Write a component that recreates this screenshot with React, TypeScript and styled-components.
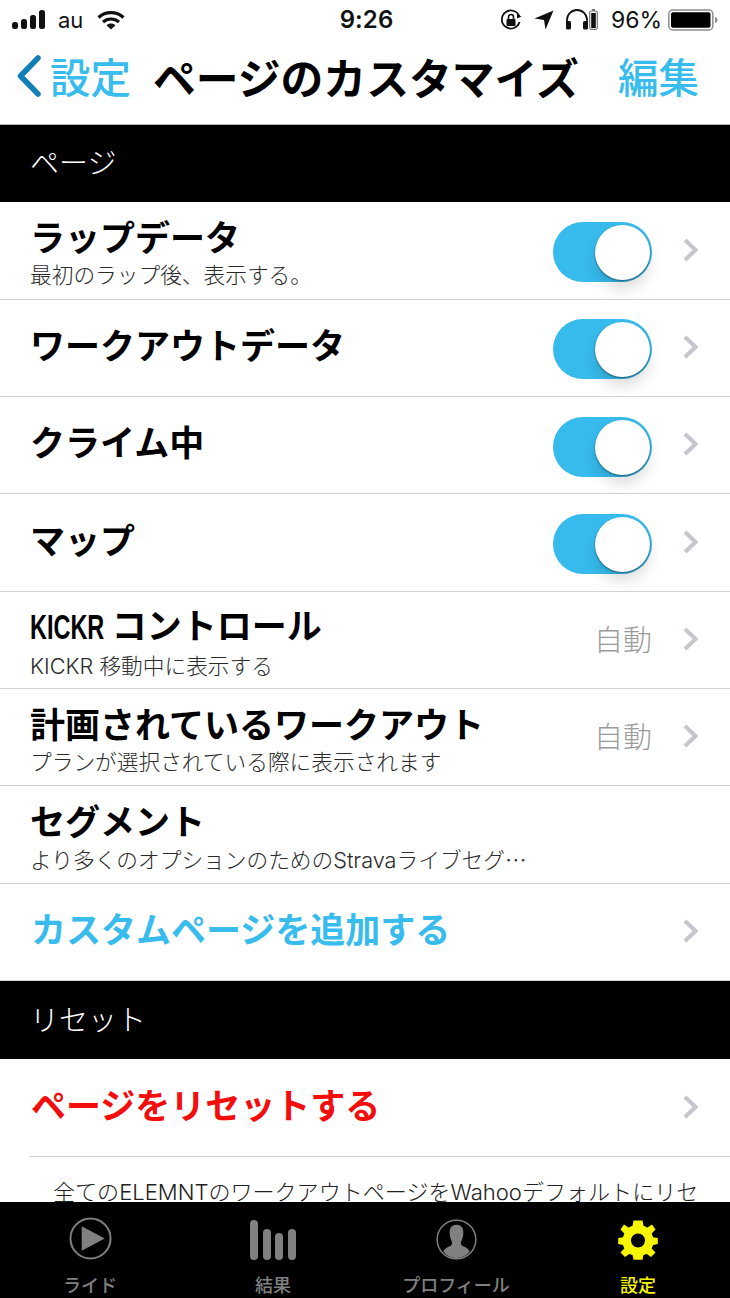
import React from "react";
import styled, { createGlobalStyle } from "styled-components";

const GlobalStyle = createGlobalStyle`
  html, body {
    margin: 0;
    padding: 0;
    background: #fff;
  }
  body {
    font-family: "Inter", "Noto Sans CJK JP", sans-serif;
  }
`;

const jp = `"Noto Sans CJK JP", sans-serif`;
const latinJp = `"Inter", "Noto Sans CJK JP", sans-serif`;

const Page = styled.div`
  width: 730px;
  height: 1298px;
  display: flex;
  flex-direction: column;
  overflow: hidden;
  background: #fff;
`;

const StatusBar = styled.div`
  height: 39px;
  display: grid;
  grid-template-columns: 1fr auto 1fr;
  align-items: center;
  padding: 0 12px 0 12px;
  color: #111;
  font-family: "Inter", sans-serif;
  font-size: 23px;
`;

const StatusGroup = styled.div<{ $end?: boolean }>`
  display: flex;
  align-items: center;
  justify-content: ${(p) => (p.$end ? "flex-end" : "flex-start")};
`;

const Clock = styled.span`
  font-weight: 600;
  font-size: 24px;
  letter-spacing: 0.1px;
  margin-left: 3px;
`;

const Carrier = styled.span`
  margin: 0 14px 0 12px;
  font-size: 22px;
`;

const Percent = styled.span`
  margin: 0 6px 0 13px;
  font-size: 23px;
`;

const NavBar = styled.div`
  height: 85.6px;
  box-sizing: border-box;
  border-bottom: 1px solid #b2b2b2;
  display: flex;
  align-items: center;
  padding: 0 31px 10px 16px;
`;

const BackLink = styled.div`
  display: flex;
  align-items: center;
  gap: 8px;
  width: 137px;
`;

const NavAction = styled.span`
  color: #38bced;
  font-family: ${jp};
  font-size: 40.5px;
  font-weight: 500;
  line-height: 48px;
`;

const NavTitle = styled.div`
  flex: 1;
  color: #000;
  font-family: ${jp};
  font-size: 42.8px;
  font-weight: 700;
  line-height: 52px;
  white-space: nowrap;
`;

const Content = styled.div`
  flex: 1;
  min-height: 0;
  overflow: hidden;
`;

const SectionHeader = styled.div`
  height: 77.87px;
  box-sizing: border-box;
  background: #000;
  color: #fff;
  display: flex;
  align-items: center;
  padding: 0 0 5px 30px;
  font-family: ${jp};
  font-size: 29px;
  font-weight: 300;
`;

const Row = styled.div`
  height: 97.33px;
  box-sizing: border-box;
  display: flex;
  align-items: center;
  padding: 0 32px 0 30px;
  border-bottom: 1px solid #d2d2d6;
`;

const RowText = styled.div`
  flex: 1;
  min-width: 0;
  display: flex;
  flex-direction: column;
`;

const RowTitle = styled.div<{ $tone?: "blue" | "red"; $alone?: boolean }>`
  color: ${(p) =>
    p.$tone === "blue" ? "#38bced" : p.$tone === "red" ? "#f40d0d" : "#000"};
  font-family: ${jp};
  font-size: 35px;
  font-weight: 700;
  line-height: 46px;
  margin-left: ${(p) => (p.$tone ? 1 : 0)}px;
  padding-bottom: ${(p) => (p.$alone ? 8 : 0)}px;
  white-space: nowrap;
`;

const Narrow = styled.span`
  display: inline-block;
  font-family: "Liberation Sans", sans-serif;
  font-weight: 700;
  transform: scaleX(0.67);
  transform-origin: left center;
  margin-right: -37px;
`;

const RowSub = styled.div`
  color: #2b2b2b;
  font-family: ${latinJp};
  font-size: 21.7px;
  font-weight: 300;
  line-height: 26px;
  white-space: nowrap;
  margin-top: 3px;
`;

const Ellipsis = styled.span`
  font-family: ${jp};
`;

const RowValue = styled.span`
  color: #9b9b9b;
  font-family: ${jp};
  font-size: 29px;
  font-weight: 300;
  margin: 0 31px 4px 0;
`;

const Switch = styled.div`
  position: relative;
  width: 99px;
  height: 60px;
  margin: 3px 31px 0 0;
  border-radius: 30px;
  background: #36bbec;
`;

const Knob = styled.div`
  position: absolute;
  top: 3px;
  right: 2px;
  width: 55px;
  height: 55px;
  border-radius: 50%;
  background: #fff;
  box-shadow: 0 1px 2px rgba(0, 0, 0, 0.45), 0 10px 14px rgba(0, 0, 0, 0.12);
`;

const ChevronSlot = styled.div`
  display: flex;
  margin-bottom: 2px;
`;

const Spacer = styled.div<{ $w: number }>`
  width: ${(p) => p.$w}px;
`;

const ResetRow = styled(Row)`
  border-bottom: none;
`;

const Divider = styled.div`
  height: 1px;
  margin-left: 30px;
  background: #d2d2d6;
`;

const Note = styled.div`
  padding: 20px 20px 0 53px;
  color: #222;
  font-family: ${latinJp};
  font-size: 22.05px;
  font-weight: 300;
  line-height: 30px;
  white-space: nowrap;
`;

const TabBar = styled.div`
  height: 96px;
  flex-shrink: 0;
  background: #000;
  display: grid;
  grid-template-columns: 180px 186px 180px 184px;
`;

const Tab = styled.div<{ $active?: boolean }>`
  display: flex;
  flex-direction: column;
  align-items: center;
  color: ${(p) => (p.$active ? "#f7f500" : "#808080")};
  font-family: ${jp};
  font-size: 18px;
  font-weight: 500;
`;

const TabIcon = styled.div`
  height: 58px;
  margin-bottom: 11px;
  display: flex;
  align-items: flex-end;
  justify-content: center;
`;

const TabLabel = styled.span`
  line-height: 26px;
  white-space: nowrap;
`;

const Signal = () => (
  <svg width="34" height="20" viewBox="0 0 34 20">
    <g fill="#111">
      <rect x="0" y="12" width="6" height="7" rx="2.5" />
      <rect x="9" y="9" width="6" height="10" rx="2.5" />
      <rect x="18" y="5" width="6" height="14" rx="2.5" />
      <rect x="27" y="0" width="6" height="19" rx="2.5" />
    </g>
  </svg>
);

const Wifi = () => (
  <svg width="28" height="20" viewBox="0 0 28 20" fill="none" stroke="#111" strokeWidth="3.2">
    <path d="M1.5 7.5C8.5 1 19.5 1 26.5 7.5" />
    <path d="M6 12C10.500 8 17.500 8 22 12" />
    <path d="M14 19.500L9.500 15.200C12 13 16 13 18.500 15.200Z" fill="#111" stroke="none" />
  </svg>
);

const RotationLock = () => (
  <svg width="22" height="22" viewBox="0 0 22 22" fill="none">
    <path d="M19.500 13A9 9 0 1 1 19.500 8" stroke="#111" strokeWidth="1.800" />
    <path d="M21.500 7.500L17 9.500L17 5Z" fill="#111" />
    <rect x="6.500" y="10" width="9" height="7" rx="1" fill="#111" />
    <path d="M8.500 10V8A2.500 2.500 0 0 1 13.500 8V10" stroke="#111" strokeWidth="1.600" />
  </svg>
);

const LocationArrow = () => (
  <svg width="20" height="20" viewBox="0 0 20 20">
    <path d="M19.500 0.500L0.500 8.500L10 10L11.500 19.500Z" fill="#111" />
  </svg>
);

const Headphones = () => (
  <svg width="24" height="21" viewBox="0 0 24 21" fill="none">
    <path d="M2 14V11A10 10 0 0 1 22 11V14" stroke="#111" strokeWidth="1.800" />
    <rect x="1" y="12" width="5" height="8.500" rx="1.600" fill="#111" />
    <rect x="18" y="12" width="5" height="8.500" rx="1.600" fill="#111" />
  </svg>
);

const SmallBattery = () => (
  <svg width="9" height="21" viewBox="0 0 9 21">
    <rect x="3" y="0" width="3" height="2" fill="#777" />
    <rect x="0.700" y="2" width="7.600" height="18.300" rx="1.500" fill="none" stroke="#777" strokeWidth="1.200" />
    <rect x="2.200" y="4" width="4.600" height="15" fill="#111" />
  </svg>
);

const Battery = () => (
  <svg width="50" height="22" viewBox="0 0 50 22">
    <rect x="0.800" y="1" width="44" height="20" rx="4" fill="#fff" stroke="#8c8c8c" strokeWidth="1.500" />
    <rect x="3" y="3.200" width="39.500" height="15.600" rx="2" fill="#000" />
    <path d="M47 8C48.500 8.400 49.500 9.500 49.500 11C49.500 12.500 48.500 13.600 47 14Z" fill="#8c8c8c" />
  </svg>
);

const BackChevron = () => (
  <svg width="26" height="42" viewBox="0 0 26 42" fill="none">
    <path d="M22 3L4.500 21L22 39" stroke="#117fb8" strokeWidth="5.500" strokeLinecap="round" strokeLinejoin="round" />
  </svg>
);

const Chevron = () => (
  <ChevronSlot>
    <svg width="15" height="24" viewBox="0 0 15 24" fill="none">
      <path d="M2 2L12.500 12L2 22" stroke="#c6c6cc" strokeWidth="4" />
    </svg>
  </ChevronSlot>
);

const PlayIcon = () => (
  <svg width="43" height="43" viewBox="0 0 44 44">
    <circle cx="22" cy="22" r="20.500" fill="none" stroke="#808080" strokeWidth="2" />
    <path d="M13 9.500L36.500 22L13 34.500Z" fill="#808080" />
  </svg>
);

const BarsIcon = () => (
  <svg width="46" height="40" viewBox="0 0 46 40">
    <g fill="#808080">
      <rect x="0" y="0" width="8" height="40" rx="4" />
      <rect x="13" y="9" width="8" height="31" rx="4" />
      <rect x="25" y="13" width="8" height="27" rx="4" />
      <rect x="38" y="9" width="8" height="31" rx="4" />
    </g>
  </svg>
);

const ProfileIcon = () => (
  <svg width="41" height="41" viewBox="0 0 42 42">
    <circle cx="21" cy="21" r="19.800" fill="none" stroke="#808080" strokeWidth="1.500" />
    <path
      d="M21 6C15.500 6 13.800 10 14 15C14.200 18 14.800 20 16 22.500C16.800 24.500 16.500 26.500 15 27.500C12.500 29 8.500 30 7.500 33.500C11 37.800 16 40 21 40C26 40 31 37.800 34.500 33.500C33.500 30 29.500 29 27 27.500C25.500 26.500 25.200 24.500 26 22.500C27.200 20 27.800 18 28 15C28.200 10 26.500 6 21 6Z"
      fill="#808080"
    />
  </svg>
);

const GearIcon = () => (
  <svg width="40" height="40" viewBox="0 0 40 40">
    <path
      fillRule="evenodd"
      fill="#f7f500"
      d="M15.500 0.500H24.500L25.500 5.800L29.500 7.500L34 4.500L37.500 9.500L33.700 13.500L35 17.200L39.800 18V24L35 25L33.700 28.500L37.500 32.500L33 37L28.800 34L25.500 35L24.500 39.800H15.500L14.500 35L11.200 34L7 37L2.500 32.500L6.300 28.500L5 25L0.200 24V18L5 17.200L6.300 13.500L2.500 9.500L6 4.500L10.500 7.500L14.500 5.800ZM20 13.500A7 7 0 1 0 20 27.500A7 7 0 1 0 20 13.500Z"
    />
  </svg>
);

type RowData = {
  title: React.ReactNode;
  sub?: React.ReactNode;
  value?: string;
  toggle?: boolean;
  chevron?: boolean;
};

const pageRows: RowData[] = [
  { title: "ラップデータ", sub: "最初のラップ後、表示する。", toggle: true, chevron: true },
  { title: "ワークアウトデータ", toggle: true, chevron: true },
  { title: "クライム中", toggle: true, chevron: true },
  { title: "マップ", toggle: true, chevron: true },
  {
    title: (
      <>
        <Narrow>KICKR</Narrow> コントロール
      </>
    ),
    sub: "KICKR 移動中に表示する",
    value: "自動",
    chevron: true,
  },
  {
    title: "計画されているワークアウト",
    sub: "プランが選択されている際に表示されます",
    value: "自動",
    chevron: true,
  },
  {
    title: "セグメント",
    sub: (
      <>
        より多くのオプションのためのStravaライブセグ<Ellipsis>…</Ellipsis>
      </>
    ),
  },
];

const tabs = [
  { label: "ライド", icon: <PlayIcon /> },
  { label: "結果", icon: <BarsIcon /> },
  { label: "プロフィール", icon: <ProfileIcon /> },
  { label: "設定", icon: <GearIcon />, active: true },
];

export default function App() {
  return (
    <Page>
      <GlobalStyle />
      <StatusBar>
        <StatusGroup>
          <Signal />
          <Carrier>au</Carrier>
          <Wifi />
        </StatusGroup>
        <Clock>9:26</Clock>
        <StatusGroup $end>
          <RotationLock />
          <Spacer $w={12} />
          <LocationArrow />
          <Spacer $w={11} />
          <Headphones />
          <SmallBattery />
          <Percent>96%</Percent>
          <Battery />
        </StatusGroup>
      </StatusBar>
      <NavBar>
        <BackLink>
          <BackChevron />
          <NavAction>設定</NavAction>
        </BackLink>
        <NavTitle>ページのカスタマイズ</NavTitle>
        <NavAction>編集</NavAction>
      </NavBar>
      <Content>
        <SectionHeader>ページ</SectionHeader>
        {pageRows.map((row, i) => (
          <Row key={i}>
            <RowText>
              <RowTitle $alone={!row.sub}>{row.title}</RowTitle>
              {row.sub && <RowSub>{row.sub}</RowSub>}
            </RowText>
            {row.value && <RowValue>{row.value}</RowValue>}
            {row.toggle && (
              <Switch>
                <Knob />
              </Switch>
            )}
            {row.chevron && <Chevron />}
          </Row>
        ))}
        <Row>
          <RowText>
            <RowTitle $tone="blue" $alone>
              カスタムページを追加する
            </RowTitle>
          </RowText>
          <Chevron />
        </Row>
        <SectionHeader>リセット</SectionHeader>
        <ResetRow>
          <RowText>
            <RowTitle $tone="red" $alone>
              ページをリセットする
            </RowTitle>
          </RowText>
          <Chevron />
        </ResetRow>
        <Divider />
        <Note>全てのELEMNTのワークアウトページをWahooデフォルトにリセ</Note>
      </Content>
      <TabBar>
        {tabs.map((tab) => (
          <Tab key={tab.label} $active={tab.active}>
            <TabIcon>{tab.icon}</TabIcon>
            <TabLabel>{tab.label}</TabLabel>
          </Tab>
        ))}
      </TabBar>
    </Page>
  );
}
